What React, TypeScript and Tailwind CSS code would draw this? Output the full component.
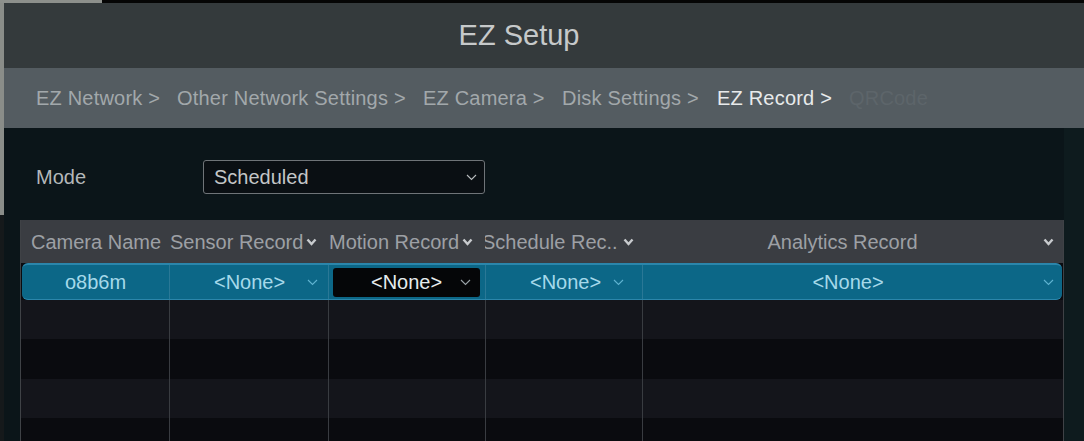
import React from "react";

function Thin({ className = "" }: { className?: string }) {
  return (
    <svg width="11" height="7" viewBox="0 0 11 7" className={className} fill="none">
      <path d="M1 1 L5.5 5.5 L10 1" stroke="currentColor" strokeWidth="1.1" />
    </svg>
  );
}

function Bold({ className = "" }: { className?: string }) {
  return (
    <svg width="11" height="8" viewBox="0 0 11 8" className={className} fill="none">
      <path d="M1.5 1.5 L5.5 6 L9.5 1.5" stroke="currentColor" strokeWidth="2.4" />
    </svg>
  );
}

const crumbs = [
  { t: "EZ Network >", c: "text-[#a2a8ab] w-[141px]" },
  { t: "Other Network Settings >", c: "text-[#a2a8ab] w-[246px]" },
  { t: "EZ Camera >", c: "text-[#a2a8ab] w-[139px]" },
  { t: "Disk Settings >", c: "text-[#a2a8ab] w-[155px]" },
  { t: "EZ Record >", c: "text-[#e8eaeb] w-[132px]" },
  { t: "QRCode", c: "text-[#5d656a]" },
];

const emptyRows = [
  { h: "h-[39px]", bg: "bg-[#14151b]" },
  { h: "h-[40px]", bg: "bg-[#0a0b0f]" },
  { h: "h-[39px]", bg: "bg-[#14151b]" },
  { h: "h-[40px]", bg: "bg-[#0a0b0f]" },
];

export default function App() {
  return (
    <div className="w-[1084px] h-[441px] flex flex-col overflow-hidden bg-[#050607] font-['Liberation_Sans',Arial,sans-serif]">
      <div className="h-[3px] flex shrink-0">
        <div className="w-[102px] bg-[#8d908c]" />
        <div className="flex-1 bg-[#050505]" />
      </div>
      <div className="flex flex-1 min-h-0">
        <div className="w-[4px] flex flex-col shrink-0">
          <div className="h-[212px] bg-[#8a8d89]" />
          <div className="flex-1 bg-[#15191b]" />
        </div>
        <div className="flex-1 flex flex-col min-w-0">
          <div className="h-[65px] shrink-0 bg-[#343a3c] flex items-center justify-center pr-[50px] text-[29px] text-[#c6c9ca]">
            EZ Setup
          </div>
          <div className="h-[60px] shrink-0 bg-[#545c61] flex items-center pl-[32px] text-[20px] tracking-[0.2px] whitespace-nowrap">
            {crumbs.map((c) => (
              <span key={c.t} className={`shrink-0 ${c.c}`}>
                {c.t}
              </span>
            ))}
          </div>
          <div className="flex-1 flex bg-[#0b1519] min-h-0">
            <div className="w-[1060px] flex flex-col pt-[32px]">
              <div className="flex items-center h-[34px] shrink-0">
                <span className="w-[199px] pl-[32px] text-[20px] text-[#b4b8ba]">Mode</span>
                <div className="w-[282px] h-[34px] border border-[#6f7478] rounded-[3px] bg-[#0a0f13] flex items-center pl-[10px] pr-[7px]">
                  <span className="flex-1 text-[20px] text-[#c3c6c7]">Scheduled</span>
                  <Thin className="text-[#b8bcbe]" />
                </div>
              </div>
              <div className="ml-[16px] mt-[26px] w-[1044px] flex-1 flex flex-col border-l border-r border-[#3f4246] min-h-0">
                <div className="h-[43px] shrink-0 bg-[#3a3d42] flex text-[20px] text-[#9da0a5]">
                  <div className="w-[148px] flex items-center pl-[10px] whitespace-nowrap overflow-hidden">Camera Name</div>
                  <div className="w-[159px] flex items-center pl-[1px] gap-[3px] whitespace-nowrap overflow-hidden">
                    <span>Sensor Record</span>
                    <Bold className="text-[#c8cbce] shrink-0" />
                  </div>
                  <div className="w-[157px] flex items-center pl-[1px] gap-[3px] whitespace-nowrap overflow-hidden">
                    <span>Motion Record</span>
                    <Bold className="text-[#c8cbce] shrink-0" />
                  </div>
                  <div className="w-[157px] flex items-center gap-[5px] whitespace-nowrap overflow-hidden">
                    <span className="ml-[-3px]">Schedule Rec..</span>
                    <Bold className="text-[#c8cbce] shrink-0" />
                  </div>
                  <div className="flex-1 flex items-center pr-[9px]">
                    <span className="flex-1 text-center">Analytics Record</span>
                    <Bold className="text-[#c8cbce]" />
                  </div>
                </div>
                <div className="h-[37px] shrink-0 bg-[#0a0b0f] flex">
                  <div className="flex-1 flex mx-[1px] rounded-[6px] bg-[#0c6787] border-t-2 border-b border-[#2b86ab] text-[20px] text-[#a6d9ea]">
                    <div className="w-[147px] flex items-center justify-center">o8b6m</div>
                    <div className="w-[159px] flex items-center pl-[44px] gap-[22px] border-l border-[#2a7896]">
                      <span>&lt;None&gt;</span>
                      <Thin className="text-[#5fb3d1]" />
                    </div>
                    <div className="w-[157px] flex items-center pl-[4px] border-l border-[#2a7896]">
                      <div className="w-[147px] h-[29px] bg-[#050608] rounded-[3px] flex items-center pl-[38px] gap-[18px] text-[#e6ecee]">
                        <span>&lt;None&gt;</span>
                        <Thin className="text-[#9aa3a8]" />
                      </div>
                    </div>
                    <div className="w-[157px] flex items-center pl-[44px] gap-[12px] border-l border-[#2a7896]">
                      <span>&lt;None&gt;</span>
                      <Thin className="text-[#5fb3d1]" />
                    </div>
                    <div className="flex-1 flex items-center pr-[8px] pl-[10px] border-l border-[#2a7896]">
                      <span className="flex-1 text-center">&lt;None&gt;</span>
                      <Thin className="text-[#5fb3d1]" />
                    </div>
                  </div>
                </div>
                {emptyRows.map((r, i) => (
                  <div key={i} className={`${r.h} ${r.bg} shrink-0 flex`}>
                    <div className="w-[148px]" />
                    <div className="w-[159px] border-l border-[#393c41]" />
                    <div className="w-[157px] border-l border-[#393c41]" />
                    <div className="w-[157px] border-l border-[#393c41]" />
                    <div className="flex-1 border-l border-[#393c41]" />
                  </div>
                ))}
              </div>
            </div>
            <div className="flex-1 bg-[#0e1b1e]" />
          </div>
        </div>
      </div>
    </div>
  );
}
